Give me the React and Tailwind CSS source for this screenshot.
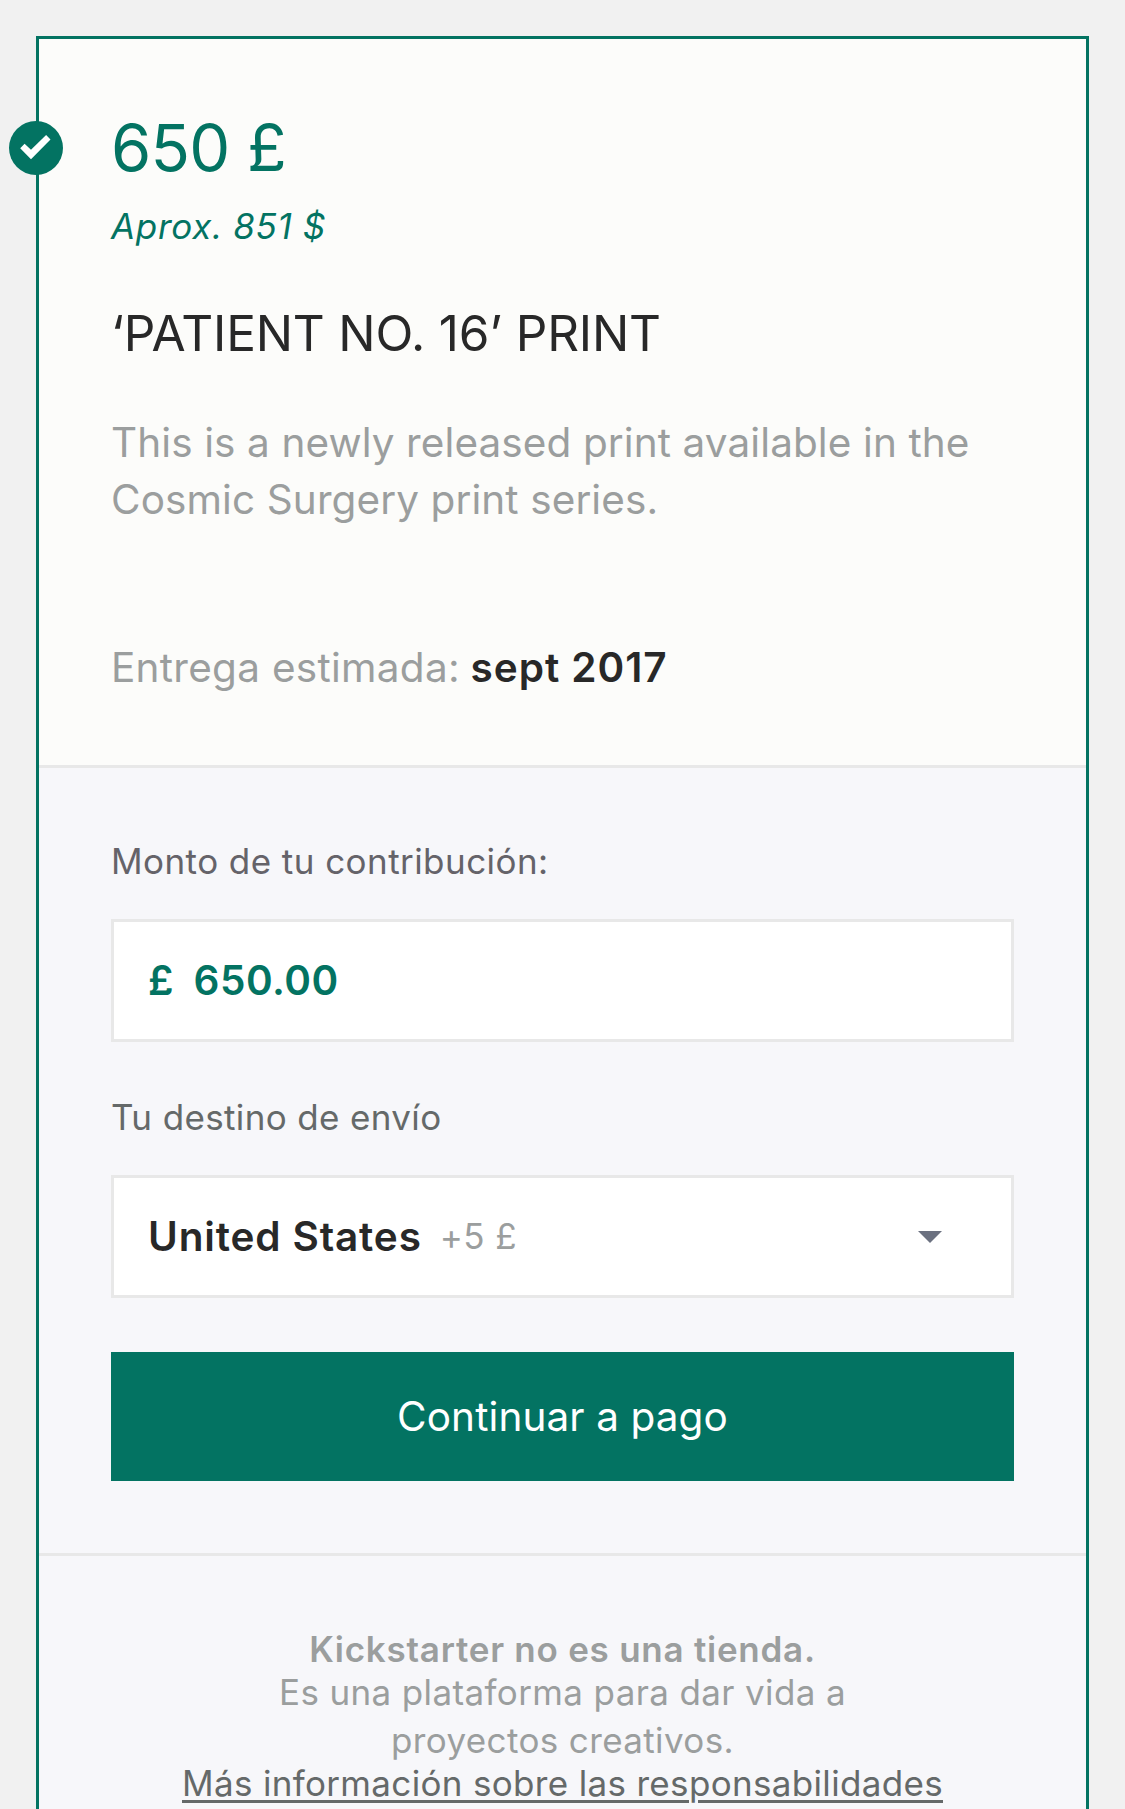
import React from "react";

function CheckBadge() {
  return (
    <div className="absolute -left-[30px] top-[82px] size-[54px] rounded-full bg-[#037362]">
      <svg viewBox="0 0 54 54" className="size-full" aria-hidden="true">
        <path d="M11.2 27.2L15.6 22.8L22 28.7L37.1 14.1L41.5 18.5L22 38.2Z" fill="#fff" />
      </svg>
    </div>
  );
}

function RewardSummary() {
  return (
    <section className="border-b-[3px] border-[#e8e8e8] bg-[#fcfcfa] px-[72px] pt-[69px] pb-[69px]">
      <h2 className="text-[65px] leading-[79px] tracking-[-0.75px] text-[#037362]">650 £</h2>
      <p className="mt-3 text-[35px] italic leading-[54px] tracking-[0.68px] text-[#037362]">Aprox. 851 $</p>
      <h3 className="mt-[47px] whitespace-nowrap text-[49.5px] leading-[66px] tracking-[-0.18px] text-[#282828]">
        ‘PATIENT NO. 16’ PRINT
      </h3>
      <p className="mt-12 whitespace-nowrap text-[40.5px] leading-[57px] tracking-[0.1px] text-[#9b9e9e]">
        This is a newly released print available in the
        <br />
        Cosmic Surgery print series.
      </p>
      <p className="mt-[111px] whitespace-nowrap text-[40.5px] leading-[57px] tracking-[0.28px] text-[#9b9e9e]">
        Entrega estimada:{" "}
        <span className="-ml-px font-semibold tracking-[0.95px] text-[#282828]">sept 2017</span>
      </p>
    </section>
  );
}

function Field({ children }) {
  return (
    <div className="mt-[31px] flex h-[123px] items-center border-[3px] border-[#e8e8e8] bg-white pl-[34px] pr-[69px]">
      {children}
    </div>
  );
}

function PledgeForm() {
  return (
    <section className="border-b-[3px] border-[#e8e8e8] px-[72px] pt-[66px] pb-[72px]">
      <p className="text-[35px] leading-[54px] tracking-[0.44px] text-[#656369]">Monto de tu contribución:</p>
      <Field>
        <div className="flex gap-5 text-[40.5px] font-semibold leading-[57px] text-[#037362]">
          <span>£</span>
          <span className="tracking-[0.5px]">650.00</span>
        </div>
      </Field>
      <p className="mt-12 text-[35px] leading-[54px] tracking-[0.36px] text-[#656969]">Tu destino de envío</p>
      <Field>
        <span className="text-[40.5px] font-semibold leading-[57px] tracking-[0.85px] text-[#282828]">United States</span>
        <span className="-mt-px ml-[18px] text-[35px] leading-[54px] tracking-[0.4px] text-[#9b9e9e]">+5 £</span>
        <svg viewBox="0 0 24 12" className="ml-auto h-3 w-6" aria-hidden="true">
          <path d="M0 0h24L12 12z" fill="#6b7180" />
        </svg>
      </Field>
      <button className="mt-[54px] flex h-[129px] w-full items-center justify-center bg-[#037362] text-[40.5px] leading-[57px] tracking-[0.1px] text-white">
        Continuar a pago
      </button>
    </section>
  );
}

function Disclaimer() {
  return (
    <section className="pt-[74px] text-center text-[35px] text-[#9b9e9e]">
      <p className="font-semibold leading-[38px] tracking-[0.75px]">Kickstarter no es una tienda.</p>
      <p className="leading-[48px] tracking-[0.37px]">
        Es una plataforma para dar vida a
        <br />
        proyectos creativos.
      </p>
      <a
        href="#"
        className="block whitespace-nowrap leading-[38px] tracking-[0.33px] text-[#656969] underline decoration-[3px] underline-offset-4"
      >
        Más información sobre las responsabilidades
      </a>
    </section>
  );
}

export default function App() {
  return (
    <main className="h-[1809px] overflow-hidden bg-[#f1f1f1] px-9 pt-9 font-[Inter,sans-serif]">
      <article className="relative h-[1900px] border-[3px] border-[#037362] bg-[#f7f7fa]">
        <CheckBadge />
        <RewardSummary />
        <PledgeForm />
        <Disclaimer />
      </article>
    </main>
  );
}
